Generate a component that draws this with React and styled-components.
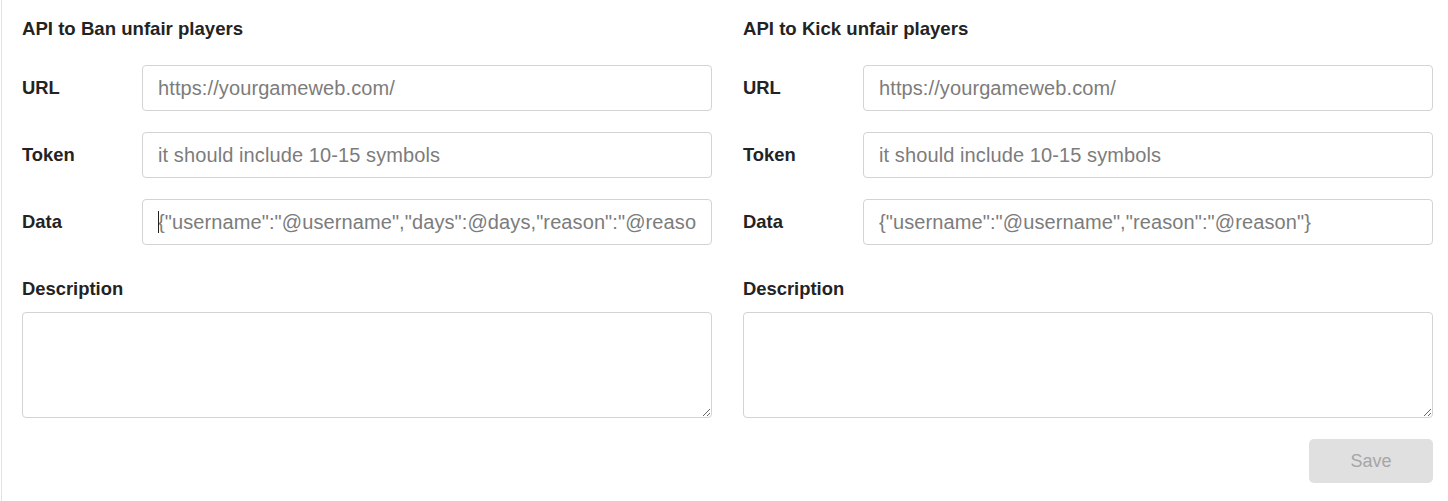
import React from "react";
import styled, { createGlobalStyle } from "styled-components";

const Global = createGlobalStyle`
  html, body { margin: 0; padding: 0; background: #fff; }
  body { font-family: "Liberation Sans", Arial, sans-serif; }
`;

const Page = styled.div`
  margin-left: 1px;
  border-left: 1px solid #e2e2e2;
  height: 501px;
  box-sizing: border-box;
  padding: 18px 15px 0 20px;
`;

const Columns = styled.div`
  display: grid;
  grid-template-columns: 690px 690px;
  column-gap: 31px;
`;

const Column = styled.section`
  display: flex;
  flex-direction: column;
`;

const Title = styled.h2`
  margin: 0 0 25px;
  font-size: 18.6px;
  line-height: 22px;
  font-weight: 700;
  color: #232323;
`;

const Rows = styled.div`
  display: flex;
  flex-direction: column;
  gap: 21px;
`;

const Row = styled.div`
  display: flex;
  align-items: center;
`;

const Label = styled.label`
  width: 120px;
  flex: none;
  font-size: 18.4px;
  line-height: 22px;
  font-weight: 700;
  color: #232323;
`;

const FieldWrap = styled.div`
  position: relative;
  flex: 1;
`;

const Input = styled.input`
  box-sizing: border-box;
  width: 100%;
  height: 46px;
  border: 1px solid #d3d3d3;
  border-radius: 4px;
  padding: 0 15px;
  font-family: "Liberation Sans", Arial, sans-serif;
  font-size: 20px;
  letter-spacing: 0.1px;
  color: #7c7c7c;
  outline: none;
  &::placeholder { color: #7c7c7c; opacity: 1; }
`;

const Caret = styled.span`
  position: absolute;
  left: 16px;
  top: 12px;
  width: 1px;
  height: 22px;
  background: #222;
`;

const DescLabel = styled.div`
  margin-top: 33px;
  font-size: 18.4px;
  line-height: 22px;
  font-weight: 700;
  color: #232323;
`;

const TextArea = styled.textarea`
  box-sizing: border-box;
  margin-top: 12px;
  width: 100%;
  height: 106px;
  border: 1px solid #d3d3d3;
  border-radius: 4px;
  padding: 10px 15px;
  font-family: "Liberation Sans", Arial, sans-serif;
  font-size: 18px;
  outline: none;
  display: block;
`;

const Footer = styled.div`
  display: flex;
  justify-content: flex-end;
  margin-top: 21px;
`;

const SaveButton = styled.button`
  width: 124px;
  height: 44px;
  border: none;
  border-radius: 5px;
  background: #e0e0e0;
  color: #a6a6a6;
  font-family: "Liberation Sans", Arial, sans-serif;
  font-size: 18px;
  cursor: default;
`;

function ApiForm({ title, dataPlaceholder, caret, children }) {
  return (
    <Column>
      <Title>{title}</Title>
      <Rows>
        <Row>
          <Label>URL</Label>
          <FieldWrap>
            <Input placeholder="https://yourgameweb.com/" />
          </FieldWrap>
        </Row>
        <Row>
          <Label>Token</Label>
          <FieldWrap>
            <Input placeholder="it should include 10-15 symbols" />
          </FieldWrap>
        </Row>
        <Row>
          <Label>Data</Label>
          <FieldWrap>
            <Input placeholder={dataPlaceholder} />
            {caret && <Caret />}
          </FieldWrap>
        </Row>
      </Rows>
      <DescLabel>Description</DescLabel>
      <TextArea />
      {children}
    </Column>
  );
}

export default function App() {
  return (
    <>
      <Global />
      <Page>
        <Columns>
          <ApiForm
            title="API to Ban unfair players"
            dataPlaceholder={'{"username":"@username","days":@days,"reason":"@reason"}'}
            caret
          />
          <ApiForm
            title="API to Kick unfair players"
            dataPlaceholder={'{"username":"@username","reason":"@reason"}'}
          >
            <Footer>
              <SaveButton>Save</SaveButton>
            </Footer>
          </ApiForm>
        </Columns>
      </Page>
    </>
  );
}
